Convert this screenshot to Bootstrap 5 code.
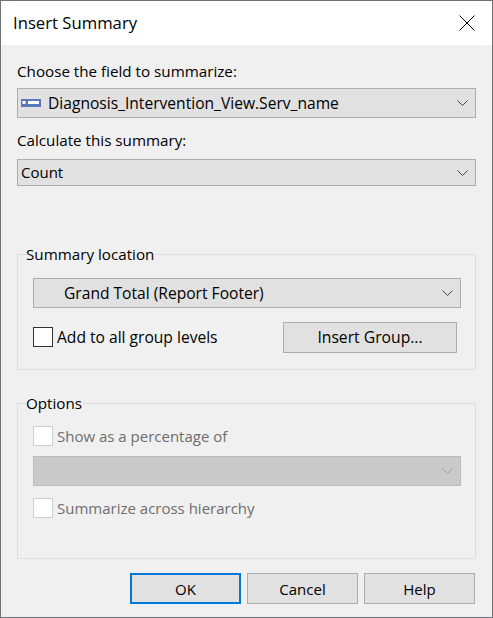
<!DOCTYPE html>
<html lang="en">
<head>
    <meta charset="UTF-8">
    <meta name="viewport" content="width=device-width, initial-scale=1.0">
    <title>Insert Summary</title>
    <link rel="stylesheet" href="https://cdn.jsdelivr.net/npm/bootstrap@5.3.0/dist/css/bootstrap.min.css">
    <style>
        html, body { height: 100%; }
        body { background-color: #6f7276; font-family: "Open Sans", "Noto Sans", sans-serif; font-size: 15px; color: #000; }
        .dlg-window { width: 492px; height: 617px; background-color: #f0f0f0; border: 1px solid #6f7276; border-right-width: 0; border-bottom-width: 0; }
        .dlg-title { height: 44px; background-color: #fff; padding-left: 12px; padding-right: 17px; font-size: 16.7px; }
        .dlg-close { margin-bottom: 1px; }
        .dlg-body { padding: 0 16px; }
        .dlg-label { height: 20px; line-height: 20px; font-size: 15.2px; }
        .dlg-label-first { margin-top: 16px; margin-bottom: 7px; }
        .dlg-label-second { margin-top: 12px; margin-bottom: 9px; }
        .dlg-combo { height: 30px; background-color: #e1e1e1; border: 1px solid #adadad; padding: 0 7px 0 3px; }
        .dlg-combo-short { height: 27px; }
        .dlg-combo-off { background-color: #cacaca; border-color: #bcbcbc; margin-top: 8px; }
        .dlg-combo-first { margin-top: 14px; }
        .dlg-combo-value { padding-top: 2px; }
        .dlg-combo-text { padding-left: 27px; }
        .dlg-group { border: 1px solid #dcdcdc; margin: 0; padding: 0 14px 0 15px; min-width: 0; }
        .dlg-group-location { height: 126px; margin-top: 58px; }
        .dlg-group-options { height: 166px; margin-top: 23px; }
        .dlg-group legend { float: none; width: auto; font-size: 15.2px; line-height: 20px; margin: -10px 0 0 -7px; padding: 0 1px 0 0; }
        input.dlg-check[type=checkbox] { width: 20px; height: 20px; margin: 0; background-color: #fff; border: 1px solid #333; border-radius: 0; flex-shrink: 0; opacity: 1; }
        input.dlg-check[type=checkbox]:disabled { border-color: #cfcfcf; }
        .dlg-text { font-size: 15.6px; }
        .dlg-icon-gap { gap: 7px; }
        .dlg-check-row { gap: 4px; }
        .dlg-row-location { margin-top: 14px; padding-right: 4px; }
        .dlg-row-first { margin-top: 12px; }
        .dlg-row-last { margin-top: 11px; }
        .dlg-muted { color: #6d6d6d; }
        .btn.dlg-btn { width: 111px; height: 31px; padding: 1px 0 0; background-color: #e1e1e1; border: 1px solid #adadad; border-radius: 0; color: #000; font-size: 15px; line-height: 1; }
        .btn.dlg-btn-wide { width: 174px; font-size: 15.7px; }
        .btn.dlg-btn-default { border: 2px solid #0078d7; }
        .dlg-footer { margin-top: 14px; padding-right: 1px; gap: 6px; }
    </style>
</head>
<body>
    <div class="dlg-window d-flex flex-column">
        <div class="dlg-title d-flex align-items-center justify-content-between">
            <span>Insert Summary</span>
            <svg class="dlg-close" width="16" height="16" viewBox="0 0 16 16" fill="none" stroke="#000" stroke-width="1"><path d="M0.5 0.5 15.5 15.5M15.5 0.5 0.5 15.5"/></svg>
        </div>
        <div class="dlg-body">
            <div class="dlg-label dlg-label-first">Choose the field to summarize:</div>
            <div class="dlg-combo d-flex align-items-center justify-content-between">
                <span class="d-flex align-items-center dlg-icon-gap">
                    <svg width="20" height="8" viewBox="0 0 20 8"><rect width="20" height="8" fill="#5b78bb"/><rect x="1.5" y="2" width="3" height="3" fill="#fff"/><rect x="7" y="2" width="11" height="3" fill="#fff"/></svg>
                    <span class="dlg-text dlg-combo-value">Diagnosis_Intervention_View.Serv_name</span>
                </span>
                <svg width="11" height="6" viewBox="0 0 11 6" fill="none" stroke="#444"><path d="M0.5 0.5 5.5 5.5 10.5 0.5"/></svg>
            </div>
            <div class="dlg-label dlg-label-second">Calculate this summary:</div>
            <div class="dlg-combo dlg-combo-short d-flex align-items-center justify-content-between">
                <span>Count</span>
                <svg width="11" height="6" viewBox="0 0 11 6" fill="none" stroke="#444"><path d="M0.5 0.5 5.5 5.5 10.5 0.5"/></svg>
            </div>

            <fieldset class="dlg-group dlg-group-location">
                <legend>Summary location</legend>
                <div class="dlg-combo dlg-combo-first d-flex align-items-center justify-content-between">
                    <span class="dlg-combo-text dlg-combo-value dlg-text">Grand Total (Report Footer)</span>
                    <svg width="11" height="6" viewBox="0 0 11 6" fill="none" stroke="#444"><path d="M0.5 0.5 5.5 5.5 10.5 0.5"/></svg>
                </div>
                <div class="d-flex align-items-center justify-content-between dlg-row-location">
                    <div class="d-flex align-items-center dlg-check-row">
                        <input class="form-check-input dlg-check" type="checkbox" id="allLevels">
                        <label class="dlg-text" for="allLevels">Add to all group levels</label>
                    </div>
                    <button type="button" class="btn dlg-btn dlg-btn-wide">Insert Group...</button>
                </div>
            </fieldset>

            <fieldset class="dlg-group dlg-group-options">
                <legend>Options</legend>
                <div class="d-flex align-items-center dlg-check-row dlg-row-first">
                    <input class="form-check-input dlg-check" type="checkbox" id="showPct" disabled>
                    <label class="dlg-muted" for="showPct">Show as a percentage of</label>
                </div>
                <div class="dlg-combo dlg-combo-off d-flex align-items-center justify-content-end">
                    <svg width="11" height="6" viewBox="0 0 11 6" fill="none" stroke="#9a9a9a"><path d="M0.5 0.5 5.5 5.5 10.5 0.5"/></svg>
                </div>
                <div class="d-flex align-items-center dlg-check-row dlg-row-last">
                    <input class="form-check-input dlg-check" type="checkbox" id="acrossHier" disabled>
                    <label class="dlg-muted" for="acrossHier">Summarize across hierarchy</label>
                </div>
            </fieldset>

            <div class="dlg-footer d-flex justify-content-end">
                <button type="button" class="btn dlg-btn dlg-btn-default">OK</button>
                <button type="button" class="btn dlg-btn">Cancel</button>
                <button type="button" class="btn dlg-btn">Help</button>
            </div>
        </div>
    </div>
    <script src="https://cdn.jsdelivr.net/npm/bootstrap@5.3.0/dist/js/bootstrap.bundle.min.js"></script>
</body>
</html>
